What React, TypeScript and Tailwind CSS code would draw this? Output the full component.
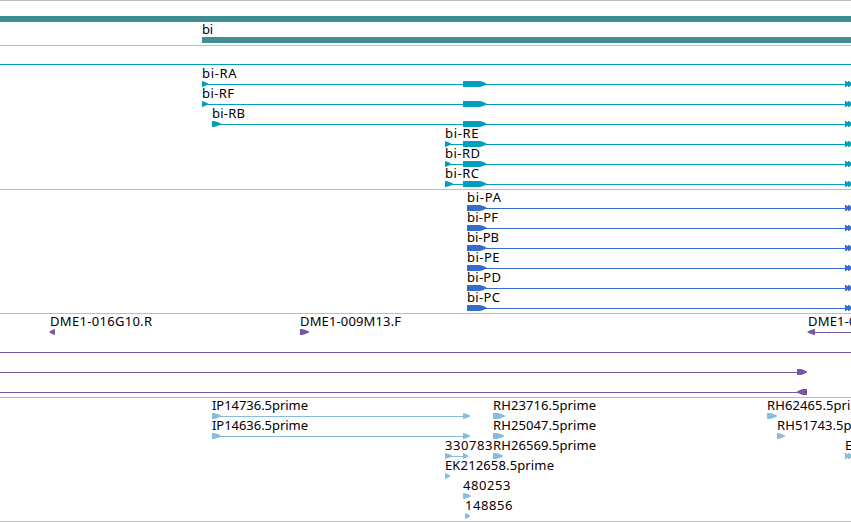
import { Fragment } from 'react';

interface Block {
  x: number;
  w: number;
  tip?: number;
  left?: boolean;
}

interface Feature {
  label?: string;
  // drawn width of the label
  labelWidth?: number;
  // line from start to end, in chart pixels
  line?: [number, number];
  blocks?: Block[];
  // two clipped exons at the right edge of the view
  edge?: boolean;
}

interface Track {
  id: string;
  color: string;
  rowHeight: number;
  solid?: boolean;
  rows: Feature[][];
}

const WIDTH = 851;

const transcript = (label: string, labelWidth: number, x: number, w: number): Feature[] => [
  {
    label,
    labelWidth,
    line: [x, WIDTH],
    blocks: [
      { x, w },
      { x: 463, w: 23.5, tip: 6.5 },
    ],
    edge: true,
  },
];

const protein = (label: string, labelWidth: number): Feature[] => [
  {
    label,
    labelWidth,
    line: [467, WIDTH],
    blocks: [{ x: 467, w: 19.5, tip: 6.5 }],
    edge: true,
  },
];

const est = (label: string, labelWidth: number, x: number, w: number): Feature => ({
  label,
  labelWidth,
  blocks: [{ x, w }],
});

const tracks: Track[] = [
  {
    id: 'genes',
    color: '#3f8e93',
    rowHeight: 21,
    solid: true,
    rows: [[{ line: [0, WIDTH] }], [{ label: 'bi', labelWidth: 11, line: [202, WIDTH] }]],
  },
  {
    id: 'transcripts',
    color: '#009fc0',
    rowHeight: 20,
    rows: [
      [{ line: [0, WIDTH] }],
      transcript('bi-RA', 34.5, 202, 6),
      transcript('bi-RF', 32, 202, 6),
      transcript('bi-RB', 33, 212, 9),
      transcript('bi-RE', 33.5, 445, 6),
      transcript('bi-RD', 35, 445, 6),
      transcript('bi-RC', 34, 445, 8),
    ],
  },
  {
    id: 'proteins',
    color: '#336ccc',
    rowHeight: 20,
    rows: [
      protein('bi-PA', 34),
      protein('bi-PF', 31),
      protein('bi-PB', 32),
      protein('bi-PE', 32.5),
      protein('bi-PD', 34),
      protein('bi-PC', 33),
    ],
  },
  {
    id: 'bac-ends',
    color: '#7557a8',
    rowHeight: 20,
    rows: [
      [
        { label: 'DME1-016G10.R', labelWidth: 102, blocks: [{ x: 49.5, w: 5.5, left: true }] },
        { label: 'DME1-009M13.F', labelWidth: 101, blocks: [{ x: 300, w: 9 }] },
        { label: 'DME1-0', labelWidth: 48.5, line: [808, WIDTH], blocks: [{ x: 807.5, w: 7.5, left: true }] },
      ],
      [{ line: [0, WIDTH] }],
      [{ line: [0, 800], blocks: [{ x: 797, w: 10, tip: 6 }] }],
      [{ line: [0, 800], blocks: [{ x: 797, w: 10, tip: 6, left: true }] }],
    ],
  },
  {
    id: 'ests',
    color: '#88bbdd',
    rowHeight: 20,
    rows: [
      [
        { label: 'IP14736.5prime', labelWidth: 96, line: [212, 466], blocks: [{ x: 212, w: 9 }, { x: 463, w: 7 }] },
        est('RH23716.5prime', 103, 493, 12),
        est('RH62465.5prime', 103, 767, 10),
      ],
      [
        { label: 'IP14636.5prime', labelWidth: 96, line: [212, 466], blocks: [{ x: 212, w: 9 }, { x: 463, w: 7 }] },
        est('RH25047.5prime', 103, 493, 11),
        est('RH51743.5prime', 103, 777, 8),
      ],
      [
        { label: '330783', labelWidth: 47.5, line: [445, 466], blocks: [{ x: 445, w: 7 }, { x: 463, w: 5 }] },
        est('RH26569.5prime', 103, 493, 10),
        { label: 'E', labelWidth: 7.5, line: [845, 846], edge: true },
      ],
      [est('EK212658.5prime', 109, 445, 5)],
      [est('480253', 47.5, 463, 8)],
      [est('148856', 47.5, 465, 5)],
    ],
  },
];

function arrow({ x, w, tip = Math.min(w, 7), left }: Block) {
  const back = left ? x + w : x;
  const head = left ? x : x + w;
  const neck = left ? x + tip : x + w - tip;
  const shoulder = left ? x + tip / 2 : x + w - tip / 2;
  return `${back},14 ${neck},14 ${shoulder},15.1 ${head},16.5 ${head},17.5 ${shoulder},18.9 ${neck},20 ${back},20`;
}

function Row({ features, track }: { features: Feature[]; track: Track }) {
  return (
    <svg width={WIDTH} height={track.rowHeight} className="block shrink-0 overflow-visible" fill={track.color}>
      {features.map((f, i) => {
        const x = f.line && f.line[0] > 0 ? f.line[0] : Math.ceil(f.blocks?.[0].x ?? 0);
        return (
          <Fragment key={i}>
            {f.line && (
              <rect x={f.line[0]} y={track.solid ? 14 : 17} width={f.line[1] - f.line[0]} height={track.solid ? 6 : 1} />
            )}
            {f.blocks?.map((b) => (
              <polygon key={b.x} points={arrow(b)} />
            ))}
            {f.edge && (
              <polygon points="845,14 846,14 848,15.5 848,14 849,14 851,15.5 851,18.5 849,20 848,20 848,18.5 846,20 845,20" />
            )}
            {f.label && (
              <text x={x} y={11} textLength={f.labelWidth} className="fill-black">
                {f.label}
              </text>
            )}
          </Fragment>
        );
      })}
    </svg>
  );
}

export default function App() {
  return (
    <main className="flex h-[522px] w-[851px] flex-col overflow-hidden border-t border-[#bebebe] bg-white font-['Noto_Sans',sans-serif] text-[13px]">
      {tracks.map((track) => (
        <section
          key={track.id}
          className={`flex shrink-0 flex-col border-b border-[#bebebe] pt-px ${track.solid ? 'pb-px' : 'pb-0.5'}`}
        >
          {track.rows.map((features, i) => (
            <Row key={i} features={features} track={track} />
          ))}
        </section>
      ))}
    </main>
  );
}
